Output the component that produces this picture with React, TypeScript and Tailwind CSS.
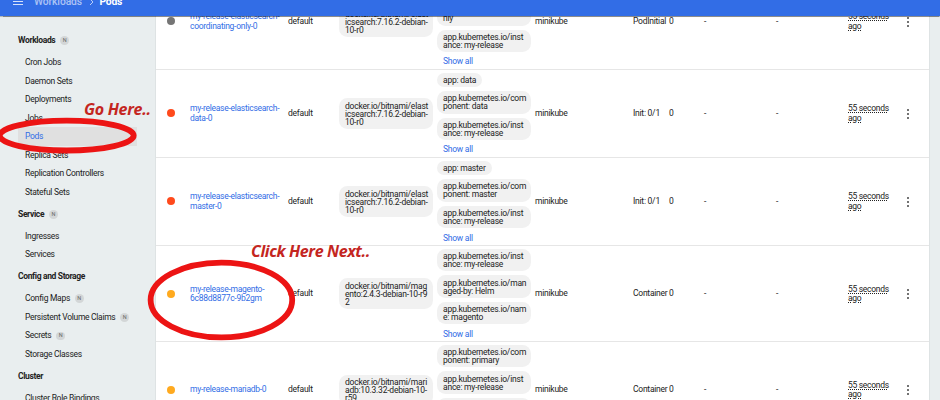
import React from "react";

type NavItem = { label: string; badge?: boolean; active?: boolean };
type NavGroup = { title: string; badge?: boolean; items: NavItem[] };

const groups: NavGroup[] = [
  {
    title: "Workloads",
    badge: true,
    items: [
      { label: "Cron Jobs" },
      { label: "Daemon Sets" },
      { label: "Deployments" },
      { label: "Jobs" },
      { label: "Pods", active: true },
      { label: "Replica Sets" },
      { label: "Replication Controllers" },
      { label: "Stateful Sets" },
    ],
  },
  { title: "Service", badge: true, items: [{ label: "Ingresses" }, { label: "Services" }] },
  {
    title: "Config and Storage",
    items: [
      { label: "Config Maps", badge: true },
      { label: "Persistent Volume Claims", badge: true },
      { label: "Secrets", badge: true },
      { label: "Storage Classes" },
    ],
  },
  { title: "Cluster", items: [{ label: "Cluster Role Bindings" }] },
];

type Pod = {
  dot: string;
  name: string[];
  image: string[];
  labels: string[][];
  status: string;
};

const instance = ["app.kubernetes.io/inst", "ance: my-release"];
const elastic = ["docker.io/bitnami/elast", "icsearch:7.16.2-debian-", "10-r0"];

const pods: Pod[] = [
  {
    dot: "bg-[#757575]",
    name: ["my-release-elasticsearch-", "coordinating-only-0"],
    image: elastic,
    labels: [["app: coordinating-", "only"], ["ponent: coordinating-o", "nly"], instance],
    status: "PodInitial",
  },
  {
    dot: "bg-[#ff4a1c]",
    name: ["my-release-elasticsearch-", "data-0"],
    image: elastic,
    labels: [["app: data"], ["app.kubernetes.io/com", "ponent: data"], instance],
    status: "Init: 0/1",
  },
  {
    dot: "bg-[#ff4a1c]",
    name: ["my-release-elasticsearch-", "master-0"],
    image: elastic,
    labels: [["app: master"], ["app.kubernetes.io/com", "ponent: master"], instance],
    status: "Init: 0/1",
  },
  {
    dot: "bg-[#ffaa1f]",
    name: ["my-release-magento-", "6c88d8877c-9b2gm"],
    image: ["docker.io/bitnami/mag", "ento:2.4.3-debian-10-r9", "2"],
    labels: [instance, ["app.kubernetes.io/man", "aged-by: Helm"], ["app.kubernetes.io/nam", "e: magento"]],
    status: "Container",
  },
  {
    dot: "bg-[#ffaa1f]",
    name: ["my-release-mariadb-0"],
    image: ["docker.io/bitnami/mari", "adb:10.3.32-debian-10-", "r59"],
    labels: [["app.kubernetes.io/com", "ponent: primary"], instance, ["app.kubernetes.io/man", "aged-by: Helm"]],
    status: "Container",
  },
];

function Lines({ lines }: { lines: string[] }) {
  return (
    <>
      {lines.map((line) => (
        <span key={line} className="block whitespace-nowrap">
          {line}
        </span>
      ))}
    </>
  );
}

function Badge() {
  return (
    <span className="ml-[5px] flex size-[8.5px] items-center justify-center rounded-full bg-[#d3d6d7] text-[5.5px] leading-none font-normal tracking-normal text-[#666]">
      N
    </span>
  );
}

function Chip({ lines }: { lines: string[] }) {
  return (
    <div
      className={
        "rounded-[8.5px] bg-[#f1f1f1] px-[6px] py-[3.15px] text-[8.5px] leading-[8px] tracking-[-0.22px] " +
        (lines.length > 1 ? "w-[93.5px]" : "w-fit")
      }
    >
      <Lines lines={lines} />
    </div>
  );
}

function PodRow({ pod }: { pod: Pod }) {
  return (
    <div className="grid shrink-0 grid-cols-[34px_98px_51px_98px_98px_98px_36px_35px_72px_72px_55px_26px] items-center border-b border-[#e6e6e6] text-[8.5px] tracking-[-0.24px]">
      <span className={"mt-[0.8px] ml-[10.5px] size-[8px] rounded-full " + pod.dot} />
      <div className="pt-[1.4px] leading-[9.3px] tracking-[-0.28px] text-[#326de6]">
        <Lines lines={pod.name} />
      </div>
      <span className="pt-[1.4px]">default</span>
      <div className="pt-[1px]">
        <Chip lines={pod.image} />
      </div>
      <div className="flex flex-col items-start gap-[4.5px] pt-[3px]">
        {pod.labels.map((lines) => (
          <Chip key={lines.join("")} lines={lines} />
        ))}
        <span className="ml-[6px] h-[11.7px] pt-[0.6px] leading-[8px] text-[#326de6]">Show all</span>
      </div>
      <span className="pt-[1.4px]">minikube</span>
      <span className="pt-[1.4px] whitespace-nowrap">{pod.status}</span>
      <span className="pt-[1.4px]">0</span>
      <span className="pt-[1.4px]">-</span>
      <span className="pt-[1.4px]">-</span>
      <div className="pt-[1.4px] leading-[9.3px] tracking-[-0.3px] underline decoration-dotted decoration-1 underline-offset-1">
        <Lines lines={["55 seconds", "ago"]} />
      </div>
      <div className="mt-[1px] ml-[4.3px] flex flex-col gap-[2px]">
        <i className="size-[2px] rounded-full bg-[#444]" />
        <i className="size-[2px] rounded-full bg-[#444]" />
        <i className="size-[2px] rounded-full bg-[#444]" />
      </div>
    </div>
  );
}

export default function App() {
  return (
    <div className="relative flex h-[400px] w-[940px] flex-col overflow-hidden bg-[#e9eeef] font-[Roboto,sans-serif] text-[#222]">
      <header className="relative z-10 flex h-[16px] shrink-0 items-start overflow-hidden bg-[#326de6] pl-[13px] text-white shadow-[0_0.5px_1px_rgba(0,0,0,0.45)]">
        <div className="mt-[-3px] flex h-[8px] w-[10px] flex-col justify-between">
          <i className="h-[1px] bg-white/80" />
          <i className="h-[1px] bg-white/80" />
          <i className="h-[1px] bg-white/80" />
        </div>
        <div className="mt-[-4px] flex items-center text-[10.3px] leading-[12px] font-medium">
          <span className="ml-[11px] w-[48px] tracking-[-0.1px] text-white/60">Workloads</span>
          <svg className="ml-[6.5px] h-[8px] w-[5px]" viewBox="0 0 5 8" fill="none" stroke="#b9cdf7">
            <path d="M1 1l3 3-3 3" />
          </svg>
          <span className="ml-[6px] font-bold tracking-[-0.2px]">Pods</span>
        </div>
      </header>

      <div className="flex min-h-0 flex-1">
        <nav className="w-[156px] shrink-0 overflow-hidden pt-[11.8px] text-[8.5px] tracking-[-0.29px]">
          {groups.map((group) => (
            <section key={group.title}>
              <h2 className="flex h-[25.4px] items-center pl-[18px] font-bold tracking-[-0.35px]">
                {group.title}
                {group.badge && <Badge />}
              </h2>
              {group.items.map((item) => (
                <div
                  key={item.label}
                  className={
                    "ml-[18px] flex h-[18.56px] w-[119px] items-center pl-[7px] whitespace-nowrap " +
                    (item.active ? "bg-[#e0e0e0] text-[#326de6]" : "")
                  }
                >
                  {item.label}
                  {item.badge && <Badge />}
                </div>
              ))}
            </section>
          ))}
        </nav>

        <main className="w-[773px] overflow-hidden bg-white shadow-[0_0_1px_rgba(0,0,0,0.25)]">
          <div className="mt-[-42.5px] flex flex-col">
            {pods.map((pod) => (
              <PodRow key={pod.name.join("")} pod={pod} />
            ))}
          </div>
        </main>
      </div>

      <svg className="absolute inset-0 z-20" width="940" height="400" fill="none" stroke="#ec1414">
        <ellipse cx="66.7" cy="135.6" rx="67" ry="14.9" strokeWidth="5.8" />
        <ellipse cx="221.4" cy="300" rx="70.8" ry="37.4" strokeWidth="5.8" />
      </svg>
      <span className="absolute top-[98.5px] left-[84px] z-20 font-['Open_Sans','Noto_Sans',sans-serif] text-[16px] leading-[20px] font-bold tracking-[-0.3px] whitespace-nowrap text-[#c4261f] italic">
        Go Here..
      </span>
      <span className="absolute top-[241px] left-[251px] z-20 font-['Open_Sans','Noto_Sans',sans-serif] text-[16px] leading-[20px] font-bold tracking-[-0.38px] whitespace-nowrap text-[#c4261f] italic">
        Click Here Next..
      </span>
    </div>
  );
}
